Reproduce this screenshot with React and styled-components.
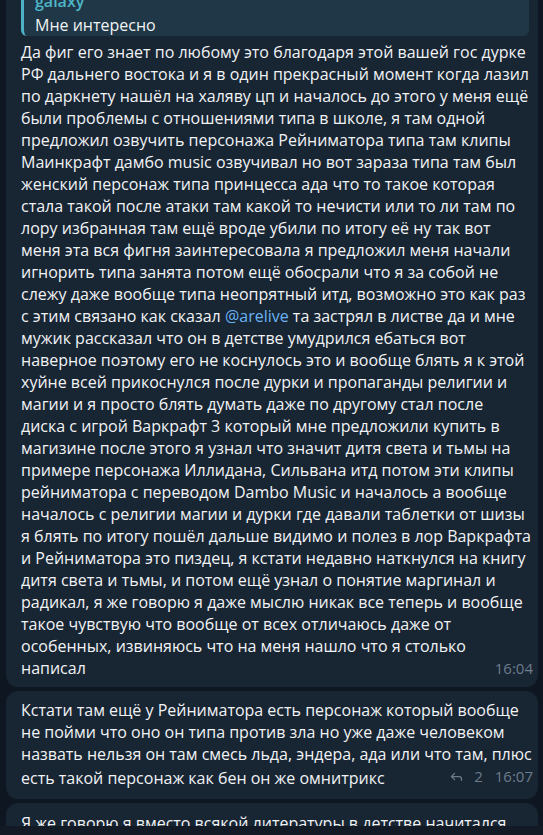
import React from "react";
import styled, { createGlobalStyle } from "styled-components";
import { Reply } from "lucide-react";

const Global = createGlobalStyle`
  html, body { margin: 0; padding: 0; background: #0e1621; }
  body { width: 543px; height: 835px; overflow: hidden; }
  #root { height: 835px; }
`;

const Screen = styled.div`
  position: relative;
  height: 835px;
  overflow: hidden;
  background: #0e1621;
  display: flex;
  flex-direction: column;
  gap: 4px;
  padding: 0 5px 0 6px;
  box-sizing: border-box;
  font-family: "Open Sans", "Noto Sans", sans-serif;
  font-size: 16px;
  color: #f1f3f5;
`;

const Bubble = styled.div`
  flex: none;
  background: #182533;
  border-radius: ${(p) => p.$radius || "12px"};
  padding: ${(p) => p.$pad || "8px 27px 10px 15px"};
  line-height: 22px;
  margin-top: ${(p) => p.$mt || "0"};
`;

const Quote = styled.div`
  background: #1f3746;
  border-radius: 6px;
  border-left: 3px solid #4eb2c6;
  margin: 0 -18px 5px 0;
  padding: 2px 10px 0 11px;
  display: flex;
  flex-direction: column;
  gap: 2px;
  line-height: 22px;
`;

const QuoteName = styled.div`
  color: #4fb6c9;
  font-weight: 600;
`;

const QuoteText = styled.div`
  color: #f1f3f5;
`;

const Line = styled.div`
  white-space: nowrap;
  display: flex;
  justify-content: space-between;
  align-items: baseline;
`;

const Mention = styled.span`
  color: #6ab3f3;
`;

const Meta = styled.span`
  display: inline-flex;
  align-items: center;
  color: #6c7c8c;
  font-size: 15px;
  margin-right: -22px;
`;

const Count = styled.span`
  display: inline-flex;
  align-items: center;
  gap: 10px;
  margin-right: 12px;
`;

const BottomBar = styled.div`
  position: absolute;
  left: 0;
  right: 0;
  bottom: 0;
  height: 9px;
  background: #121b25;
`;

const msg1 = [
  "Да фиг его знает по любому это благодаря этой вашей гос дурке",
  "РФ дальнего востока и я в один прекрасный момент когда лазил",
  "по даркнету нашёл на халяву цп и началось до этого у меня ещё",
  "были проблемы с отношениями типа в школе, я там одной",
  "предложил озвучить персонажа Рейниматора типа там клипы",
  "Маинкрафт дамбо music озвучивал но вот зараза типа там был",
  "женский персонаж типа принцесса ада что то такое которая",
  "стала такой после атаки там какой то нечисти или то ли там по",
  "лору избранная там ещё вроде убили по итогу её ну так вот",
  "меня эта вся фигня заинтересовала я предложил меня начали",
  "игнорить типа занята потом ещё обосрали что я за собой не",
  "слежу даже вообще типа неопрятный итд, возможно это как раз",
  "MENTION",
  "мужик рассказал что он в детстве умудрился ебаться вот",
  "наверное поэтому его не коснулось это и вообще блять я к этой",
  "хуйне всей прикоснулся после дурки и пропаганды религии и",
  "магии и я просто блять думать даже по другому стал после",
  "диска с игрой Варкрафт 3 который мне предложили купить в",
  "магизине после этого я узнал что значит дитя света и тьмы на",
  "примере персонажа Иллидана, Сильвана итд потом эти клипы",
  "рейниматора с переводом Dambo Music и началось а вообще",
  "началось с религии магии и дурки где давали таблетки от шизы",
  "я блять по итогу пошёл дальше видимо и полез в лор Варкрафта",
  "и Рейниматора это пиздец, я кстати недавно наткнулся на книгу",
  "дитя света и тьмы, и потом ещё узнал о понятие маргинал и",
  "радикал, я же говорю я даже мыслю никак все теперь и вообще",
  "такое чувствую что вообще от всех отличаюсь даже от",
  "особенных, извиняюсь что на меня нашло что я столько",
];

const msg2 = [
  "Кстати там ещё у Рейниматора есть персонаж который вообще",
  "не пойми что оно он типа против зла но уже даже человеком",
  "назвать нельзя он там смесь льда, эндера, ада или что там, плюс",
];

export default function App() {
  return (
    <>
      <Global />
      <Screen>
        <Bubble $mt="-20px" $pad="8px 27px 8px 15px">
          <Quote>
            <QuoteName>galaxy</QuoteName>
            <QuoteText>Мне интересно</QuoteText>
          </Quote>
          {msg1.map((l, i) =>
            l === "MENTION" ? (
              <Line key={i}>
                <span>
                  с этим связано как сказал <Mention>@arelive</Mention> та застрял в листве да и мне
                </span>
              </Line>
            ) : (
              <Line key={i}>{l}</Line>
            )
          )}
          <Line>
            <span>написал</span>
            <Meta>16:04</Meta>
          </Line>
        </Bubble>
        <Bubble>
          {msg2.map((l, i) => (
            <Line key={i}>{l}</Line>
          ))}
          <Line>
            <span>есть такой персонаж как бен он же омнитрикс</span>
            <Meta>
              <Count>
                <Reply size={15} strokeWidth={2} />2
              </Count>
              16:07
            </Meta>
          </Line>
        </Bubble>
        <Bubble $radius="12px 12px 0 0" $pad="9px 27px 9px 15px">
          <Line>Я же говорю я вместо всякой литературы в детстве начитался</Line>
          <Line>&nbsp;</Line>
        </Bubble>
        <BottomBar />
      </Screen>
    </>
  );
}
